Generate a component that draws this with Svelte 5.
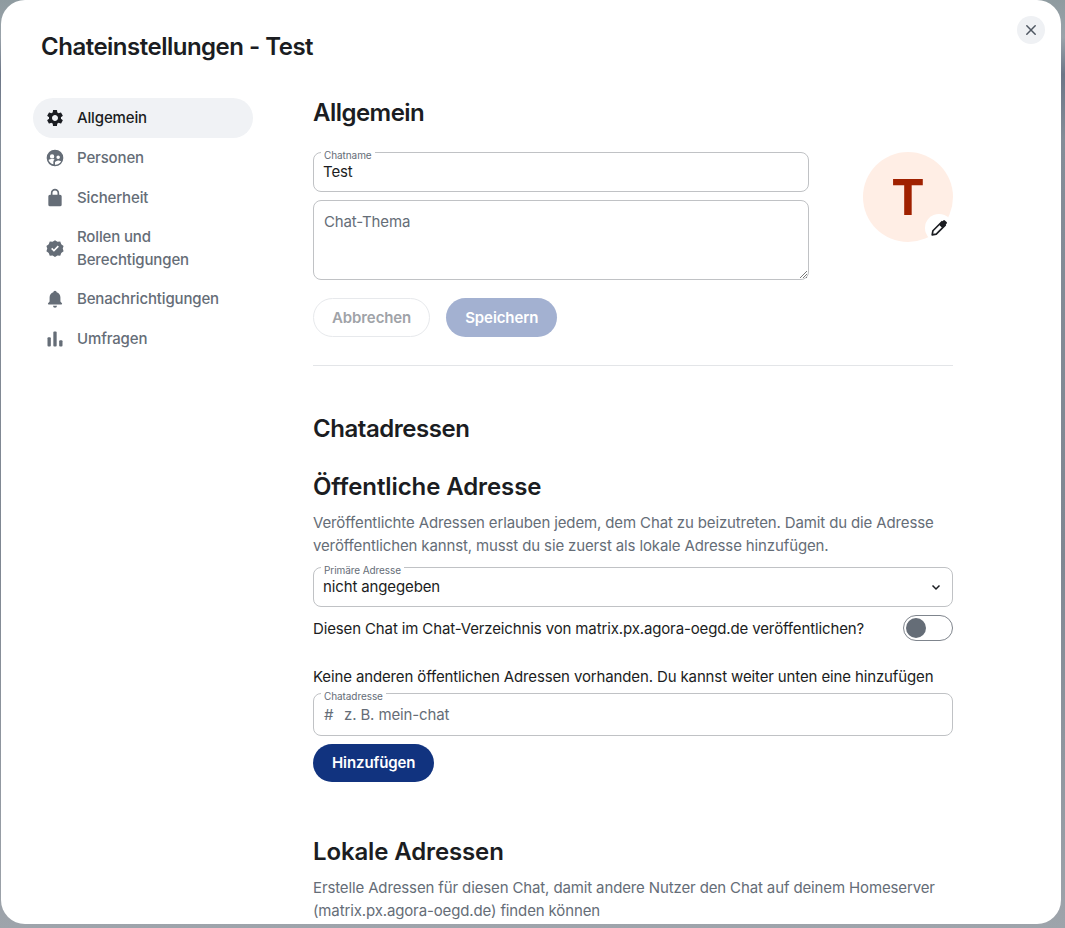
<script>
  const navItems = [
    { label: 'Allgemein', icon: 'gear', active: true },
    { label: 'Personen', icon: 'people' },
    { label: 'Sicherheit', icon: 'lock' },
    { label: 'Rollen und Berechtigungen', icon: 'badge' },
    { label: 'Benachrichtigungen', icon: 'bell' },
    { label: 'Umfragen', icon: 'poll' }
  ];
</script>

<div class="backdrop">
  <div class="dialog">
    <button class="close" aria-label="Schließen">
      <svg viewBox="0 0 24 24" width="18" height="18"><path d="M6.4 6.4l11.2 11.2M17.6 6.4L6.4 17.6" fill="none" stroke="#4f5762" stroke-width="2" stroke-linecap="round"/></svg>
    </button>
    <h1>Chateinstellungen - Test</h1>
    <div class="columns">
      <nav>
        {#each navItems as item}
          <div class="nav-item" class:active={item.active}>
            <svg viewBox="0 0 24 24" width="20" height="20" fill="currentColor">
              {#if item.icon === 'gear'}
                <path d="M19.14 12.94c.04-.3.06-.61.06-.94 0-.32-.02-.64-.07-.94l2.03-1.58a.49.49 0 0 0 .12-.61l-1.92-3.32a.488.488 0 0 0-.59-.22l-2.39.96c-.5-.38-1.03-.7-1.62-.94l-.36-2.54a.484.484 0 0 0-.48-.41h-3.84c-.24 0-.43.17-.47.41l-.36 2.54c-.59.24-1.13.57-1.62.94l-2.39-.96c-.22-.08-.47 0-.59.22L2.74 8.87c-.12.21-.08.47.12.61l2.03 1.58c-.05.3-.09.63-.09.94s.02.64.07.94l-2.03 1.58a.49.49 0 0 0-.12.61l1.92 3.32c.12.22.37.29.59.22l2.39-.96c.5.38 1.03.7 1.62.94l.36 2.54c.05.24.24.41.48.41h3.84c.24 0 .44-.17.47-.41l.36-2.54c.59-.24 1.13-.56 1.62-.94l2.39.96c.22.08.47 0 .59-.22l1.92-3.32c.12-.22.07-.47-.12-.61l-2.01-1.58zM12 15.6c-1.98 0-3.6-1.62-3.6-3.6s1.62-3.6 3.6-3.6 3.6 1.62 3.6 3.6-1.62 3.6-3.6 3.6z"/>
              {:else if item.icon === 'people'}
                <path fill-rule="evenodd" d="M12 2a10 10 0 1 0 0 20 10 10 0 0 0 0-20zM8.500 7.500a2.600 2.600 0 1 1 0 5.200 2.600 2.600 0 0 1 0-5.200zm7.300 1.500a2.100 2.100 0 1 1 0 4.200 2.100 2.100 0 0 1 0-4.200zM4.200 14.500c1-.9 2.700-1.300 4.300-1.300 1.100 0 2.200.2 3.100.6-.9.700-1.600 1.700-1.600 3v2.800a8 8 0 0 1-5.800-5.100zm7.800 5.500v-2.500c0-1.300 2.300-2.500 4-2.500 1 0 2.300.3 3.400.9A8 8 0 0 1 12 20z"/>
              {:else if item.icon === 'lock'}
                <path d="M6 22a2 2 0 0 1-2-2V10a2 2 0 0 1 2-2h1V6a5 5 0 0 1 10 0v2h1a2 2 0 0 1 2 2v10a2 2 0 0 1-2 2zM9 8h6V6a3 3 0 0 0-6 0z"/>
              {:else if item.icon === 'badge'}
                <path fill-rule="evenodd" d="M12 1.500l2.900 1.900 3.400-.3 1.200 3.200 2.800 2-1 3.200 1 3.300-2.800 2-1.200 3.200-3.400-.3-2.900 1.800-2.900-1.800-3.400.3-1.200-3.200-2.800-2 1-3.300-1-3.200 2.800-2 1.200-3.200 3.400.3zM16.700 9.300l-1.400-1.400-4.600 4.700-2-2-1.400 1.400 3.400 3.400z"/>
              {:else if item.icon === 'bell'}
                <path d="M10 4a2 2 0 1 1 4 0c2.900.8 4.500 3.300 4.500 6.200V15l1.800 2a.9.9 0 0 1-.7 1.500H4.400a.9.9 0 0 1-.7-1.500l1.800-2v-4.800C5.500 7.300 7.100 4.800 10 4zM12 22.500a2.400 2.400 0 0 1-2.400-2.300h4.800a2.400 2.400 0 0 1-2.400 2.300z"/>
              {:else}
                <rect x="3" y="10" width="4" height="11" rx="1.200"/>
                <rect x="10" y="3" width="4" height="18" rx="1.200"/>
                <rect x="17" y="13.500" width="4" height="7.500" rx="1.200"/>
              {/if}
            </svg>
            <span>{item.label}</span>
          </div>
        {/each}
      </nav>

      <main>
        <h2 class="first">Allgemein</h2>
        <div class="general">
          <div class="general-fields">
            <div class="field short">
              <span class="legend">Chatname</span>
              <span class="value">Test</span>
            </div>
            <div class="textarea">
              <span class="placeholder">Chat-Thema</span>
              <svg class="grip" viewBox="0 0 10 10" width="10" height="10"><path d="M9 2L2 9M9 5L5 9M9 8L8 9" stroke="#7a7a7a" fill="none"/></svg>
            </div>
          </div>
          <div class="avatar">
            <span>T</span>
            <div class="edit">
              <svg viewBox="0 0 24 24" width="20" height="20"><path d="M15.500 4.500l4 4L8.700 19.300 3.800 20.200l.9-4.900z" fill="#fff" stroke="#1b1d22" stroke-width="2" stroke-linejoin="round"/><path d="M14 6l3.100-3.100a1.400 1.400 0 0 1 2 0l2 2a1.400 1.400 0 0 1 0 2L18 10l-2 2-4-4z" fill="#1b1d22"/></svg>
            </div>
          </div>
        </div>
        <div class="actions">
          <button class="btn outline">Abbrechen</button>
          <button class="btn disabled">Speichern</button>
        </div>
        <hr />
        <h2 class="section">Chatadressen</h2>
        <h2 class="public">Öffentliche Adresse</h2>
        <p class="help">Veröffentlichte Adressen erlauben jedem, dem Chat zu beizutreten. Damit du die Adresse veröffentlichen kannst, musst du sie zuerst als lokale Adresse hinzufügen.</p>
        <div class="field select">
          <span class="legend">Primäre Adresse</span>
          <span class="value">nicht angegeben</span>
          <svg viewBox="0 0 12 12" width="12" height="12"><path d="M2.500 4.500L6 8l3.500-3.500" fill="none" stroke="#1b1d22" stroke-width="1.500"/></svg>
        </div>
        <div class="toggle-row">
          <span>Diesen Chat im Chat-Verzeichnis von matrix.px.agora-oegd.de veröffentlichen?</span>
          <div class="toggle"><div class="knob"></div></div>
        </div>
        <p class="none">Keine anderen öffentlichen Adressen vorhanden. Du kannst weiter unten eine hinzufügen</p>
        <div class="field address">
          <span class="legend">Chatadresse</span>
          <span class="hash">#</span>
          <span class="placeholder">z. B. mein-chat</span>
        </div>
        <button class="btn primary">Hinzufügen</button>
        <h2 class="local">Lokale Adressen</h2>
        <p class="help">Erstelle Adressen für diesen Chat, damit andere Nutzer den Chat auf deinem Homeserver (matrix.px.agora-oegd.de) finden können</p>
      </main>
    </div>
  </div>
</div>

<style>
  :global(body) {
    margin: 0;
  }
  .backdrop {
    width: 1065px;
    height: 928px;
    overflow: hidden;
    background: linear-gradient(180deg, #8f9ba0 0%, #9aa3aa 4%, #6c7687 8%, #848d98 15%, #7f8792 60%, #9ea4ab 100%);
    font-family: Inter, "Liberation Sans", sans-serif;
    color: #1b1d22;
  }
  .dialog {
    position: relative;
    box-sizing: border-box;
    width: 1060px;
    height: 924px;
    margin-left: 1px;
    padding: 33px 0 0 32px;
    overflow: hidden;
    background: #fff;
    border-radius: 24px;
  }
  .close {
    position: absolute;
    top: 16px;
    right: 16px;
    display: flex;
    align-items: center;
    justify-content: center;
    width: 28px;
    height: 28px;
    padding: 0;
    border: 0;
    border-radius: 50%;
    background: #eff1f4;
  }
  h1 {
    margin: 0 0 0 8px;
    font-size: 24px;
    line-height: 28px;
    font-weight: 600;
    letter-spacing: -0.5px;
  }
  .columns {
    display: flex;
    gap: 60px;
    margin-top: 37px;
  }
  nav {
    flex: none;
    width: 220px;
  }
  .nav-item {
    display: flex;
    align-items: center;
    gap: 12px;
    box-sizing: border-box;
    min-height: 40px;
    padding: 7px 12px;
    border-radius: 20px;
    font-size: 15px;
    line-height: 23px;
    font-weight: 500;
    letter-spacing: -0.15px;
    color: #656d77;
  }
  .nav-item svg {
    flex: none;
  }
  .nav-item span {
    padding-bottom: 1px;
  }
  .nav-item.active {
    background: #f0f2f5;
    color: #1b1d22;
  }
  main {
    flex: none;
    width: 640px;
  }
  h2 {
    margin: 0;
    font-size: 24px;
    line-height: 29px;
    font-weight: 600;
  }
  .first {
    margin-bottom: 25px;
    letter-spacing: -0.53px;
  }
  .general {
    display: flex;
    justify-content: space-between;
  }
  .general-fields {
    width: 496px;
  }
  .field,
  .textarea {
    position: relative;
    box-sizing: border-box;
    border: 1px solid #c0c2c5;
    border-radius: 8px;
    background: #fff;
  }
  .field {
    display: flex;
    align-items: center;
    height: 40px;
    padding: 0 10px 0 9px;
    font-size: 15px;
    letter-spacing: -0.13px;
  }
  .legend {
    position: absolute;
    top: -3px;
    left: 7px;
    padding: 0 3px;
    background: #fff;
    color: #656d77;
    font-size: 10px;
    line-height: 11px;
    letter-spacing: -0.08px;
  }
  .value {
    position: relative;
    top: -1px;
  }
  .textarea {
    position: relative;
    height: 80px;
    margin-top: 8px;
    padding: 11px 10px;
    font-size: 15px;
    line-height: 20px;
    letter-spacing: -0.13px;
  }
  .placeholder {
    color: #656d77;
  }
  .grip {
    position: absolute;
    right: 0;
    bottom: 0;
  }
  .avatar {
    position: relative;
    display: flex;
    align-items: center;
    justify-content: center;
    flex: none;
    width: 90px;
    height: 90px;
    border-radius: 50%;
    background: #ffeee5;
    color: #a02100;
    font-size: 50px;
    line-height: 1;
    font-weight: 700;
  }
  .edit {
    position: absolute;
    right: 0;
    bottom: 0;
    display: flex;
    align-items: center;
    justify-content: center;
    width: 28px;
    height: 28px;
    border-radius: 50%;
    background: #fff;
  }
  .actions {
    display: flex;
    gap: 16px;
    margin-top: 18px;
  }
  .btn {
    box-sizing: border-box;
    height: 39px;
    padding: 0 18px;
    border: 0;
    border-radius: 20px;
    font-family: inherit;
    font-size: 15px;
    font-weight: 600;
    letter-spacing: -0.1px;
  }
  .outline {
    border: 1px solid #e7e9ec;
    background: #fff;
    color: #9fa3a8;
  }
  .disabled {
    padding: 0 19px;
    background: #a3b1d1;
    color: #fff;
  }
  .primary {
    display: block;
    height: 38px;
    margin-top: 8px;
    padding: 0 19px 2px;
    background: #11337f;
    color: #fff;
  }
  hr {
    height: 1px;
    margin: 28px 0 0;
    border: 0;
    background: #e3e5e8;
  }
  .section {
    margin-top: 48px;
    letter-spacing: -0.45px;
  }
  .public {
    margin-top: 29px;
    letter-spacing: -0.1px;
  }
  .help {
    margin: 10px 0 0;
    font-size: 15px;
    line-height: 23px;
    letter-spacing: -0.13px;
    color: #656d77;
  }
  .select {
    justify-content: space-between;
    margin-top: 10px;
  }
  .toggle-row {
    display: flex;
    align-items: center;
    justify-content: space-between;
    height: 26px;
    margin-top: 8px;
    font-size: 15px;
    letter-spacing: -0.13px;
  }
  .toggle {
    box-sizing: border-box;
    width: 50px;
    height: 26px;
    padding: 2px;
    border: 1px solid #7f858d;
    border-radius: 13px;
  }
  .knob {
    width: 20px;
    height: 20px;
    border-radius: 50%;
    background: #656d77;
  }
  .none {
    margin: 26px 0 0;
    font-size: 15px;
    line-height: 20px;
    letter-spacing: -0.13px;
  }
  .address {
    height: 43px;
    margin-top: 6px;
  }
  .hash {
    width: 20px;
    padding-left: 1px;
    color: #656d77;
  }
  .local {
    margin-top: 55px;
    letter-spacing: -0.13px;
  }
</style>
